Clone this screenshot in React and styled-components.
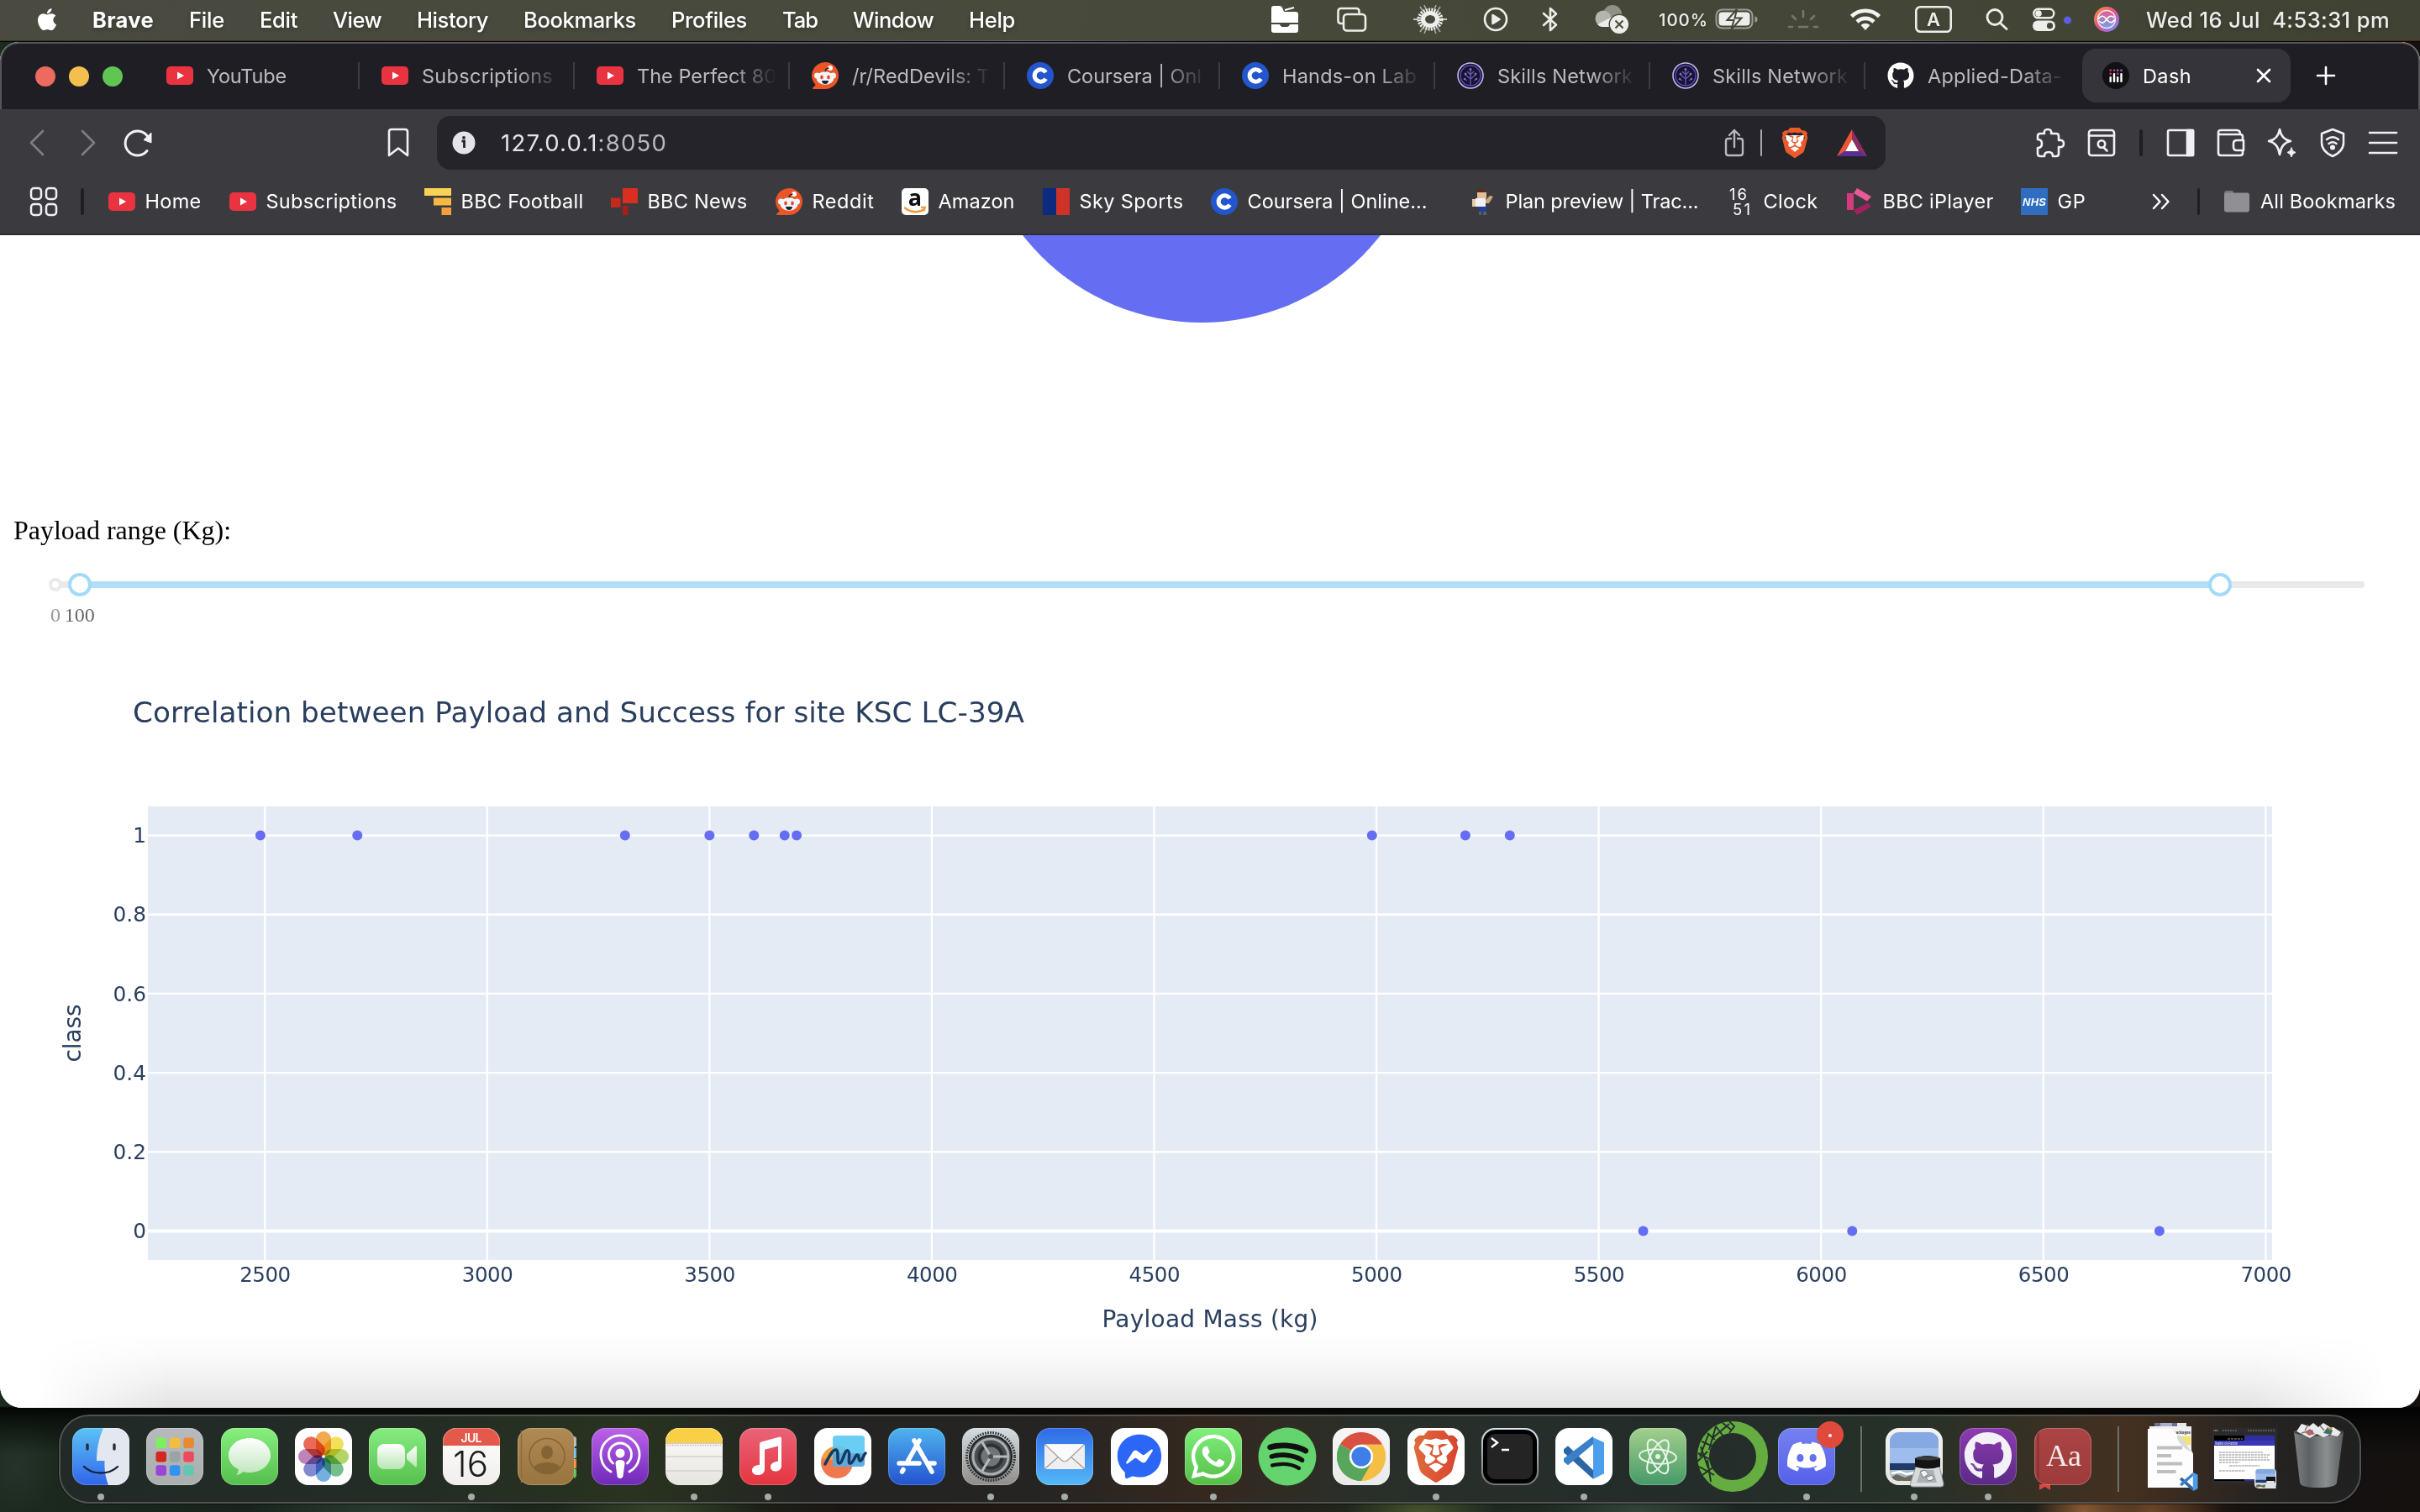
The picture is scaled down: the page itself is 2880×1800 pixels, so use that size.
import React, { useLayoutEffect, useRef } from "react";
import styled, { createGlobalStyle } from "styled-components";
import { FaApple, FaBluetoothB, FaGithub, FaSpotify, FaWhatsapp, FaDiscord, FaFacebookMessenger } from "react-icons/fa";
import { SiBrave } from "react-icons/si";

const GlobalStyle = createGlobalStyle`
  html, body { margin: 0; padding: 0; background: #10140f; }
  * { box-sizing: border-box; }
  svg { display: block; flex: none; }
`;

/* ---------- text that spreads over a known width ---------- */

const TextSpan = styled.span`
  display: inline-block;
  white-space: pre;
  flex: none;
`;

function FitText({ width, children }) {
  const ref = useRef(null);
  useLayoutEffect(() => {
    const el = ref.current;
    el.style.letterSpacing = "0px";
    const natural = el.getBoundingClientRect().width;
    el.style.letterSpacing = `${(width - natural) / el.textContent.length}px`;
  }, [width, children]);
  return <TextSpan ref={ref}>{children}</TextSpan>;
}

/* ---------- desktop ---------- */

const Desktop = styled.div`
  width: 2880px;
  height: 1800px;
  overflow: hidden;
  display: flex;
  flex-direction: column;
  font-family: Inter, "Liberation Sans", sans-serif;
  background:
    linear-gradient(180deg, transparent 1674px, rgba(0, 0, 0, 0.85) 1676px, rgba(0, 0, 0, 0.55) 1690px, transparent 1730px),
    radial-gradient(60px 60px at 2480px 1800px, #8a5a35, transparent 100%),
    radial-gradient(90px 60px at 2560px 1800px, #6b4629, transparent 100%),
    radial-gradient(90px 40px at 1690px 1800px, #46512c, transparent 100%),
    radial-gradient(120px 40px at 1950px 1800px, #34443a, transparent 100%),
    radial-gradient(120px 60px at 780px 1800px, #34422a, transparent 100%),
    radial-gradient(50px 60px at 20px 1745px, #26332a, transparent 100%),
    radial-gradient(160px 40px at 450px 1800px, #2a3a30, transparent 100%),
    linear-gradient(90deg, #1c2a1f 0, #17231c 300px, #1e2a1b 820px, #1b1613 1000px, #271b12 1400px, #1d2a20 1700px, #1b2622 2100px, #1b2018 2400px, #22150e 2600px, #131110 2700px, #14110f 2880px);
`;

/* ---------- menu bar ---------- */

const MenuBar = styled.header`
  height: 48px;
  flex: none;
  display: flex;
  align-items: center;
  padding: 0 36px 2px 41px;
  background: linear-gradient(90deg, #4a4a40, #474a3b 50%, #404334);
  color: #fff;
  font-size: 25.5px;
  text-shadow: 0 2px 5px rgba(0, 0, 0, 0.3);
`;

const Menus = styled.nav`
  display: flex;
  align-items: center;
  gap: 42px;
  margin-left: 39px;
`;

const MenuItem = styled.span`
  font-weight: ${(p) => (p.$bold ? 700 : 500)};
  display: flex;
`;

const Extras = styled.div`
  margin-left: auto;
  display: flex;
  align-items: center;
  color: #ededea;
`;

const Extra = styled.div`
  display: flex;
  align-items: center;
  margin-left: ${(p) => p.$gap}px;
  font-size: ${(p) => p.$size || 25.5}px;
  font-weight: 500;
`;

const WallpaperSliver = styled.div`
  height: 2px;
  flex: none;
  border-bottom: 1px solid #050505;
  background: linear-gradient(90deg, #2c3a1e, #3b2a20 10%, #5a3322 20%, #3f3a30 30%, #5b6a80 42%, #2c2a1c 55%, #3b3a28 65%, #6f7c8e 75%, #32361f 85%, #4c3a26 95%, #571f14);
`;

/* ---------- browser window ---------- */

const Window = styled.main`
  height: 1626px;
  flex: none;
  display: flex;
  flex-direction: column;
  border-radius: 22px 22px 26px 26px;
  overflow: hidden;
  background: #fff;
`;

const TabStrip = styled.div`
  height: 80px;
  flex: none;
  display: flex;
  align-items: center;
  background: #1f1e24;
  border: 2px solid #55555a;
  border-bottom: 0;
  border-radius: 22px 22px 0 0;
  padding: 0 0 2px 40px;
`;

const Lights = styled.div`
  display: flex;
  gap: 16px;
  margin-right: 26px;
  padding-top: 2px;
`;

const Light = styled.i`
  width: 24px;
  height: 24px;
  border-radius: 50%;
  background: ${(p) => p.$c};
`;

const Tab = styled.div`
  width: 256px;
  height: 32px;
  display: flex;
  align-items: center;
  gap: 16px;
  padding-left: 26px;
  border-right: 2px solid ${(p) => (p.$last ? "transparent" : "#3d3c42")};
  color: #bcbcbf;
  font-size: 23.5px;
`;

const TabTitle = styled.div`
  width: 172px;
  height: 32px;
  display: flex;
  align-items: center;
  mask-image: linear-gradient(90deg, #000 112px, transparent 166px);
`;

const ActiveTab = styled.div`
  width: 248px;
  height: 64px;
  margin-left: 2px;
  border-radius: 16px;
  background: #35343a;
  display: flex;
  align-items: center;
  padding: 0 23px 0 24px;
  color: #fff;
  font-size: 23.5px;
`;

const ActiveTitle = styled.div`
  margin-left: 16px;
  flex: 1;
  display: flex;
`;

const NewTab = styled.div`
  margin-left: 30px;
`;

const Toolbar = styled.div`
  height: 80px;
  flex: none;
  display: flex;
  align-items: center;
  background: #3b3a3f;
  padding: 0 26px 0 35px;
`;

const NavButtons = styled.div`
  display: flex;
  align-items: center;
  gap: 42px;
  width: 426px;
`;

const AddressBar = styled.div`
  width: 1724px;
  height: 64px;
  margin-left: 33px;
  border-radius: 16px;
  background: #25242a;
  display: flex;
  align-items: center;
  padding: 0 21px 0 18px;
  color: #e4e3ea;
  font-size: 27.5px;
`;

const Address = styled.div`
  flex: 1;
  margin-left: 30px;
  display: flex;
  b { font-weight: 400; color: #b9b8bf; }
`;

const Tools = styled.div`
  margin-left: auto;
  display: flex;
  align-items: center;
  gap: 26px;
`;

const Divider = styled.i`
  width: ${(p) => p.$w || 4}px;
  height: 32px;
  border-radius: 2px;
  background: ${(p) => p.$c || "#1f1e24"};
  margin: 0 ${(p) => p.$r || 0}px 0 ${(p) => p.$l || 0}px;
`;

const BookmarkBar = styled.div`
  height: 70px;
  flex: none;
  display: flex;
  align-items: center;
  background: #3b3a3f;
  border-bottom: 2px solid #2e2d32;
  padding: 0 28px 9px 35px;
  color: #fff;
  font-size: 23.5px;
`;

const Bookmark = styled.div`
  width: ${(p) => p.$w}px;
  flex: none;
  display: flex;
  align-items: center;
  gap: 12px;
`;

/* ---------- dashboard page ---------- */

const Page = styled.section`
  height: 1396px;
  position: relative;
  display: flex;
  flex-direction: column;
  background: #fff;
  &::after {
    content: "";
    position: absolute;
    left: 0;
    right: 0;
    bottom: 0;
    height: 90px;
    background: linear-gradient(180deg, transparent, rgba(0, 0, 0, 0.02) 30%, rgba(0, 0, 0, 0.06) 65%, rgba(0, 0, 0, 0.11));
    mask-image: linear-gradient(90deg, transparent 40px, #000 200px, #000 2680px, transparent 2840px);
  }
`;

const RangeLabel = styled.p`
  margin: 3px 0 0 16px;
  height: 36px;
  line-height: 36px;
  font-family: "Liberation Serif", serif;
  font-size: 32px;
  color: #000;
`;

const Slider = styled.div`
  position: relative;
  height: 64px;
  margin: 33px 66px 0 66px;
  padding-top: 10px;
`;

const Rail = styled.div`
  height: 8px;
  border-radius: 4px;
  background: #e9e9e9;
`;

const Track = styled.div`
  height: 8px;
  background: #b2dff7;
`;

const Knob = styled.i`
  position: absolute;
  top: ${(p) => (p.$small ? 6 : 0)}px;
  width: ${(p) => (p.$small ? 16 : 28)}px;
  height: ${(p) => (p.$small ? 16 : 28)}px;
  transform: translateX(-50%);
  border-radius: 50%;
  background: #fff;
  border: 4px solid ${(p) => (p.$small ? "#e9e9e9" : "#a4daf9")};
`;

const Mark = styled.span`
  position: absolute;
  top: 36px;
  transform: translateX(-50%);
  font: 24px/28px "Liberation Serif", serif;
  color: ${(p) => (p.$active ? "#666" : "#999")};
`;

const RANGE_MAX = 9600;
const pct = (v) => `${(v / RANGE_MAX) * 100}%`;

function PayloadSlider() {
  return (
    <Slider>
      <Rail>
        <Track style={{ marginLeft: pct(100), width: pct(8900) }} />
      </Rail>
      <Knob $small style={{ left: pct(0) }} />
      <Knob style={{ left: pct(100) }} />
      <Knob style={{ left: pct(9000) }} />
      <Mark style={{ left: pct(0) }}>0</Mark>
      <Mark $active style={{ left: pct(100) }}>100</Mark>
    </Slider>
  );
}

const POINTS = [
  [2490, 1], [2708, 1], [3310, 1], [3500, 1], [3600, 1], [3669, 1], [3696, 1],
  [4990, 1], [5200, 1], [5300, 1], [5600, 0], [6070, 0], [6761, 0],
];
const sx = (v) => 315.2 + (v - 2500) * 0.52915;
const sy = (v) => 1465.4 - v * 470.8;

function Scatter() {
  const xs = [2500, 3000, 3500, 4000, 4500, 5000, 5500, 6000, 6500, 7000];
  const ys = [0, 0.2, 0.4, 0.6, 0.8, 1];
  return (
    <svg width="2880" height="930" viewBox="0 746 2880 930" fontFamily="Verdana, 'DejaVu Sans', sans-serif" fill="#2a3f5f">
      <text x="158" y="860" fontSize="34.500" textLength="1061" lengthAdjust="spacingAndGlyphs">
        Correlation between Payload and Success for site KSC LC-39A
      </text>
      <rect x="176" y="960" width="2528" height="540" fill="#e5ebf5" />
      {xs.map((v) => (
        <g key={v}>
          <line x1={sx(v)} x2={sx(v)} y1="960" y2="1500" stroke="#fff" strokeWidth="2.200" />
          <text x={sx(v) + 0.5} y="1526" fontSize="24.500" textAnchor="middle" textLength="61">{v}</text>
        </g>
      ))}
      {ys.map((v) => (
        <g key={v}>
          <line x1="176" x2="2704" y1={sy(v)} y2={sy(v)} stroke="#fff" strokeWidth={v === 0 ? 4 : 2.4} />
          <text x="174" y={sy(v) + 8.6} fontSize="24.800" textAnchor="end">{v}</text>
        </g>
      ))}
      {POINTS.map(([x, y]) => (
        <circle key={x} cx={sx(x)} cy={sy(y)} r="6" fill="#656ef2" />
      ))}
      <text x="1440" y="1580" fontSize="28" textAnchor="middle" textLength="257">Payload Mass (kg)</text>
      <text transform="translate(96 1230) rotate(-90)" fontSize="28" textAnchor="middle" textLength="69">class</text>
    </svg>
  );
}

/* ---------- favicons ---------- */

const YouTube = () => (
  <svg width="32" height="32" viewBox="0 0 32 32">
    <rect y="5" width="32" height="22" rx="5" fill="#ea3340" />
    <path d="M13 11.500v9l8-4.500z" fill="#fff" />
  </svg>
);

const Reddit = () => (
  <svg width="32" height="32" viewBox="0 0 32 32">
    <path d="M16 0a16 16 0 0 1 0 32H2.200c-1 0-1.400-1-.8-1.700L4.700 27.300A16 16 0 0 1 16 0z" fill="#eb5528" />
    <circle cx="22" cy="7" r="3" fill="#fff" />
    <path d="M16 12c0-3 2-5 4.500-5" stroke="#222" strokeWidth="1.500" fill="none" />
    <circle cx="6.500" cy="16" r="3.500" fill="#f3f6f8" />
    <circle cx="25.500" cy="16" r="3.500" fill="#f3f6f8" />
    <ellipse cx="16" cy="19" rx="10.500" ry="7.800" fill="#f0f5f8" />
    <ellipse cx="12" cy="18" rx="1.800" ry="2.400" fill="#e8462a" />
    <ellipse cx="20" cy="18" rx="1.800" ry="2.400" fill="#e8462a" />
    <path d="M12 22h8c-.5 3-2 4-4 4s-3.500-1-4-4z" fill="#18242b" />
  </svg>
);

const Coursera = () => (
  <svg width="32" height="32" viewBox="0 0 32 32">
    <circle cx="16" cy="16" r="16" fill="#2356cc" />
    <path d="M22.500 12.200a7.200 7.200 0 1 0 0 7.600" stroke="#fff" strokeWidth="5" fill="none" />
  </svg>
);

const Skills = () => (
  <svg width="32" height="32" viewBox="0 0 32 32" fill="none">
    <circle cx="16" cy="16" r="15" fill="#17142b" stroke="#c9bdf0" strokeWidth="1.500" />
    <circle cx="16" cy="16" r="12" stroke="#5b45c4" strokeWidth="1.500" />
    <path d="M16 27V9M16 20l-6-5M16 20l6-5M16 15l-4-4M16 15l4-4M12 22l-3-2M20 22l3-2" stroke="#6557b5" strokeWidth="1.400" />
    <g fill="#7b70b8"><circle cx="16" cy="8.500" r="1.500" /><circle cx="10" cy="14" r="1.500" /><circle cx="22" cy="14" r="1.500" /><circle cx="9" cy="20" r="1.300" /><circle cx="23" cy="20" r="1.300" /></g>
  </svg>
);

const Dash = () => (
  <svg width="32" height="32" viewBox="0 0 32 32">
    <circle cx="16" cy="16" r="16" fill="#111114" />
    <g fill="#fff">
      <rect x="8.500" y="17" width="2.400" height="7" rx="1" /><rect x="12.800" y="13" width="2.400" height="11" rx="1" />
      <rect x="17" y="17" width="2.400" height="7" rx="1" /><rect x="21.300" y="13" width="2.400" height="11" rx="1" />
    </g>
    <g fill="#d0407a"><circle cx="9.700" cy="9.700" r="1.300" /><circle cx="9.700" cy="13.700" r="1.300" /><circle cx="14" cy="9.700" r="1.300" /><circle cx="18.200" cy="13.700" r="1.300" /></g>
    <g fill="#8a7ae0"><circle cx="18.200" cy="9.700" r="1.300" /><circle cx="22.500" cy="9.700" r="1.300" /></g>
  </svg>
);

const BbcFootball = () => (
  <svg width="32" height="32" viewBox="0 0 32 32">
    <path d="M0 0h32v9H0z" fill="#f8d254" /><path d="M11 11.500h21v9H11z" fill="#f5b941" /><path d="M20.500 23H32v9H20.500z" fill="#f2a03a" />
  </svg>
);

const BbcNews = () => (
  <svg width="32" height="32" viewBox="0 0 32 32">
    <path d="M14 0h18v18H14z" fill="#d92e20" /><path d="M0 11.500h11.500V23H0z" fill="#c5281c" /><path d="M14 21h6.500v11H14z" fill="#a81f18" />
  </svg>
);

const Amazon = () => (
  <svg width="32" height="32" viewBox="0 0 32 32">
    <rect width="32" height="32" rx="5" fill="#fff" />
    <text x="16" y="21" fontSize="27" fontWeight="700" textAnchor="middle" fontFamily="Open Sans, sans-serif" fill="#111">a</text>
    <path d="M4 23.500c7 6 17 6 23 1.500" stroke="#ef9a35" strokeWidth="2.400" fill="none" strokeLinecap="round" />
    <path d="M23 23l5-.5-1.500 5" stroke="#ef9a35" strokeWidth="1.800" fill="none" />
  </svg>
);

const Sky = () => (
  <svg width="32" height="32" viewBox="0 0 32 32">
    <path d="M0 0h16v32H0z" fill="#0e2a7f" /><path d="M16 0h16v32H16z" fill="#cf3327" />
  </svg>
);

const PlanPerson = () => (
  <svg width="32" height="32" viewBox="0 0 32 32">
    <path d="M10 2h10v4H10z" fill="#5e2a1a" /><path d="M10 5h11v7H10z" fill="#e9bd93" /><path d="M4 13h5v9H4z" fill="#e6c9a8" />
    <path d="M8 12h12v10H8z" fill="#eef0f6" /><path d="M20 14l5-5 4 1-5 8h-4z" fill="#c9a67c" /><path d="M12 22h9v6h-9z" fill="#20409c" />
    <path d="M12 28h3v4h-3zM17 28h4v4h-4z" fill="#5c5c64" />
  </svg>
);

const ClockIcon = () => (
  <svg width="32" height="32" viewBox="0 0 32 32" fill="#fff" fontFamily="Inter, sans-serif" fontSize="18.500">
    <text x="3" y="13.500" textLength="21">16</text>
    <text x="7" y="31.500" textLength="21">51</text>
  </svg>
);

const IPlayer = () => (
  <svg width="32" height="32" viewBox="0 0 32 32">
    <path d="M1 6h8v20H1z" fill="#d53b7c" /><path d="M13 0l17 10-5 5.500L9 6z" fill="#ea5b96" /><path d="M13 32l17-10-4-4.500L9 26z" fill="#a3215c" />
  </svg>
);

const Nhs = () => (
  <svg width="32" height="32" viewBox="0 0 32 32">
    <path d="M0 0h32v32H0z" fill="#2f6dc0" />
    <text x="16" y="20.500" fontSize="13" fontWeight="700" fontStyle="italic" textAnchor="middle" textLength="28" fontFamily="Liberation Sans, sans-serif" fill="#fff">NHS</text>
  </svg>
);

const Folder = () => (
  <svg width="32" height="32" viewBox="0 0 32 32">
    <path d="M1 6q0-3 3-3h6q2 0 2 2v2H1z" fill="#77777c" />
    <rect x="1" y="5.500" width="30" height="23" rx="3" fill="#8f8f94" />
  </svg>
);

/* ---------- toolbar glyphs ---------- */

const Line = ({ w = 34, h = 34, c = "#f1f0f6", sw = 2.6, children }) => (
  <svg width={w} height={h} viewBox={`0 0 ${w} ${h}`} fill="none" stroke={c} strokeWidth={sw} strokeLinecap="round" strokeLinejoin="round">
    {children}
  </svg>
);

function GitHubMark() {
  return <FaGithub size={32} color="#fff" />;
}

const TABS = [
  [YouTube, "YouTube", 95],
  [YouTube, "Subscriptions", 156],
  [YouTube, "The Perfect 80", 166],
  [Reddit, "/r/RedDevils: T", 164],
  [Coursera, "Coursera | Onl", 160],
  [Coursera, "Hands-on Lab", 160],
  [Skills, "Skills Network", 161],
  [Skills, "Skills Network", 161],
  [GitHubMark, "Applied-Data-", 160],
];

const BOOKMARKS = [
  [YouTube, "Home", 67, 144],
  [YouTube, "Subscriptions", 156, 232],
  [BbcFootball, "BBC Football", 146, 222],
  [BbcNews, "BBC News", 119, 196],
  [Reddit, "Reddit", 74, 150],
  [Amazon, "Amazon", 91, 168],
  [Sky, "Sky Sports", 124, 200],
  [Coursera, "Coursera | Online...", 214, 307],
  [PlanPerson, "Plan preview | Trac...", 230, 307],
  [ClockIcon, "Clock", 65, 142],
  [IPlayer, "BBC iPlayer", 132, 208],
  [Nhs, "GP", 34, 156],
];

/* ---------- dock ---------- */

const DockBar = styled.footer`
  width: 2740px;
  height: 106px;
  flex: none;
  margin: 8px 0 0 70px;
  border: 2px solid #50534f;
  border-radius: 36px;
  box-shadow: 0 0 0 1px rgba(0, 0, 0, 0.5);
  padding: 0 0 0 4px;
  display: flex;
  align-items: stretch;
  background: linear-gradient(90deg, #212a27 0, #232c25 400px, #29331f 680px, #232423 900px, #252423 1150px, #35281f 1360px, #29302a 1560px, #242c2a 1900px, #263129 2200px, #443020 2460px, #262321 2620px, #1f2020 2740px);
`;

const DockItem = styled.div`
  width: 88.26px;
  flex: none;
  position: relative;
  display: flex;
  flex-direction: column;
  align-items: center;
  padding-top: 14px;
  svg { overflow: visible; }
  &::after {
    content: "";
    width: 8px;
    height: 8px;
    margin-top: 10px;
    border-radius: 50%;
    background: ${(p) => (p.$running ? "#a3aca5" : "transparent")};
  }
`;

const DockSeparator = styled.i`
  width: 2px;
  height: 78px;
  margin: 12px ${(p) => p.$r}px 0 ${(p) => p.$l}px;
  background: #6a6f6b;
  flex: none;
`;

const Badge = styled.i`
  position: absolute;
  left: 56px;
  top: 6px;
  width: 32px;
  height: 32px;
  border-radius: 50%;
  background: #e04a3c;
  &::after {
    content: "";
    position: absolute;
    left: 14px;
    top: 15px;
    width: 4px;
    height: 4px;
    border-radius: 50%;
    background: #fff;
  }
`;

function Tile({ id, from, to, children }) {
  return (
    <svg width="68" height="68" viewBox="0 0 68 68">
      <defs>
        <linearGradient id={id} x2="0" y2="1">
          <stop stopColor={from} />
          <stop offset="1" stopColor={to} />
        </linearGradient>
        <clipPath id={`${id}-clip`}><rect width="68" height="68" rx="16" /></clipPath>
      </defs>
      <rect width="68" height="68" rx="16" fill={`url(#${id})`} />
      {children}
      <rect x=".5" y=".5" width="67" height="67" rx="15.500" fill="none" stroke="#fff" strokeOpacity=".22" />
    </svg>
  );
}

const Finder = () => (
  <Tile id="finder" from="#5cc3f5" to="#3065ea">
    <path clipPath="url(#finder-clip)" d="M37 0C31 14 29 27 29 39h9.500c-.4 11 1 20 4.500 29h25V0z" fill="#e3e7f0" />
    <path d="M18 20v5M50 20v5" stroke="#2a2d33" strokeWidth="3.400" strokeLinecap="round" />
    <path d="M14 46c10 10 30 10 40 0" stroke="#16233c" strokeWidth="2.400" fill="none" strokeLinecap="round" />
  </Tile>
);

const Launchpad = () => {
  const colors = ["#7df05c", "#f3bd3e", "#e98a30", "#d2281d", "#9aa3a6", "#ee4a5e", "#9a45d6", "#2f92f5", "#5fc9b0"];
  return (
    <Tile id="launch" from="#b6babd" to="#abaeae">
      {colors.map((c, i) => (
        <rect key={c} x={11.5 + (i % 3) * 16.4} y={11.5 + Math.floor(i / 3) * 16.4} width="12.500" height="12.500" rx="3" fill={c} />
      ))}
    </Tile>
  );
};

const Messages = () => (
  <Tile id="msg" from="#86ef7e" to="#54bf4c">
    <defs><linearGradient id="msgb" x2="0" y2="1"><stop stopColor="#fff" /><stop offset="1" stopColor="#bfe5bb" /></linearGradient></defs>
    <path d="M34 12c14 0 25 9 25 20.500S48 53 34 53c-3 0-5.500-.3-8-1-1.500 2-4 3.500-8 4 2-2 3-4.500 2.500-7C13 45.500 9 39.500 9 32.500 9 21 20 12 34 12z" fill="url(#msgb)" />
  </Tile>
);

const Photos = () => {
  const petals = ["#f19a2e", "#f3dc3b", "#a9cf4b", "#5fb47c", "#5ba3dd", "#7076c9", "#b56fae", "#e8503a"];
  return (
    <Tile id="photos" from="#ffffff" to="#fbfbfb">
      {petals.map((c, i) => (
        <rect key={c} x="25" y="4" width="18" height="29" rx="9" fill={c} opacity=".85" transform={`rotate(${i * 45} 34 34)`} style={{ mixBlendMode: "multiply" }} />
      ))}
      <circle cx="34" cy="34" r="1.800" fill="#fff" />
    </Tile>
  );
};

const FaceTime = () => (
  <Tile id="ft" from="#86ec80" to="#56c04e">
    <defs><linearGradient id="ftb" x2="0" y2="1"><stop stopColor="#fff" /><stop offset="1" stopColor="#b9e5b4" /></linearGradient></defs>
    <rect x="10" y="19" width="33" height="30" rx="8" fill="url(#ftb)" />
    <path d="M45 31l10-9q2-1.500 2 1v22q0 2.500-2 1l-10-9z" fill="url(#ftb)" />
  </Tile>
);

const Calendar = () => (
  <Tile id="cal" from="#ffffff" to="#efeeec">
    <path clipPath="url(#cal-clip)" d="M0 0h68v21H0z" fill="#e35a4c" />
    <text x="34" y="16.500" fontSize="14" fontWeight="600" textAnchor="middle" textLength="25" fill="#fff" fontFamily="Inter, sans-serif">JUL</text>
    <text x="33" y="57.500" fontSize="42" fontWeight="300" textAnchor="middle" textLength="42" fill="#1c1c1c" fontFamily="Inter, sans-serif">16</text>
  </Tile>
);

const Contacts = () => (
  <Tile id="contacts" from="#b08a55" to="#98743f">
    <path d="M67 10q3 0 3 3v9h-3z" fill="#b8b8b8" /><path d="M67 24h3v12h-3z" fill="#6ab8ea" /><path d="M67 37h3v11h-3z" fill="#f08a35" /><path d="M67 49h3v8q-1 3-3 3z" fill="#57c553" />
    <path d="M4.500 3v62" stroke="#8d6b3b" strokeWidth="1.500" />
    <g fill="none" stroke="#856434" strokeWidth="1.500"><circle cx="35" cy="33.500" r="21" /></g>
    <ellipse cx="35" cy="29" rx="7" ry="8" fill="#856434" />
    <path d="M19 47c5-8 27-8 32 0-8 10-24 10-32 0z" fill="#856434" />
  </Tile>
);

const Podcasts = () => (
  <Tile id="pod" from="#bb62e8" to="#6f29b8">
    <g fill="none" stroke="#fff" strokeWidth="2.800" strokeLinecap="round">
      <path d="M23 52A23 23 0 1 1 45 52" />
      <path d="M25.500 42A13.500 13.500 0 1 1 42.500 42" />
    </g>
    <circle cx="34" cy="30" r="5.500" fill="#fff" />
    <path d="M28.500 42q0-4 5.500-4t5.500 4l-2 15q-.5 3-3.500 3t-3.500-3z" fill="#fff" />
  </Tile>
);

const Notes = () => (
  <Tile id="notes" from="#fdfdfb" to="#e6e4df">
    <path clipPath="url(#notes-clip)" d="M0 0h68v17H0z" fill="#f9cf45" />
    <path d="M0 18h68" stroke="#c8a24a" strokeWidth="1" />
    <path d="M2 20.500h64" stroke="#b9b8b4" strokeWidth="1.500" strokeDasharray="1.500 1.500" />
    <path d="M0 34h68M0 51h68" stroke="#d3d2ce" strokeWidth="1.500" />
  </Tile>
);

const Music = () => (
  <Tile id="music" from="#ea6478" to="#e5343f">
    <path d="M26 16.500l22-6q2-.3 2 2V45c0 4-3 6.500-7 6.500-3.500 0-6-2-6-5 0-4 3-6 9-7V21.500l-16 4.300V49c0 4.500-3.500 7-8 7-4 0-7-2-7-5.500 0-4.500 4-6 9-6.800V19q0-2 2-2.500z" fill="#fff" />
  </Tile>
);

const Freeform = () => (
  <Tile id="free" from="#ffffff" to="#ffffff">
    <ellipse cx="27" cy="41" rx="19" ry="19" fill="#f0784f" />
    <path d="M9 36a19 19 0 0 1 36-3l-10 8z" fill="#f3a13c" />
    <rect x="22" y="9" width="38" height="37" rx="4" fill="#5ac8f2" fillOpacity=".9" />
    <path d="M22 30h38v12q0 4-4 4H26q-4 0-4-4z" fill="#5c9fd6" opacity=".7" />
    <path d="M13 43c4-8 9-18 13-17s0 16 4 16 6-17 10-15-1 16 3 15 5-9 8-10 1 8 4 7 3-6 6-9" stroke="#123a63" strokeWidth="3.500" fill="none" strokeLinecap="round" />
  </Tile>
);

const AppStore = () => (
  <Tile id="store" from="#4fb4ee" to="#2352d0">
    <g stroke="#fff" strokeWidth="5.500" strokeLinecap="round">
      <path d="M37 15L22 42M31 15l21 37M13 42h24M47 42h8" /><path d="M18 49.500l-1.500 2.500" />
    </g>
  </Tile>
);

const Settings = () => (
  <Tile id="set" from="#d3dde2" to="#8f8c88">
    <circle cx="34" cy="34" r="28.500" fill="none" stroke="#2b2d2e" strokeWidth="3" strokeDasharray="1.700 1.400" />
    <circle cx="34" cy="34" r="25" fill="#4b4e50" stroke="#1f2021" strokeWidth="2" />
    <circle cx="34" cy="34" r="21" fill="none" stroke="#aab0b2" strokeWidth="3" />
    <circle cx="34" cy="34" r="13.500" fill="#6f7476" stroke="#2e3031" strokeWidth="4" />
    <path d="M34 34h20M34 34L24 17M34 34L24 51" stroke="#b6bcbe" strokeWidth="3" />
    <circle cx="34" cy="34" r="3" fill="#4b4e50" />
  </Tile>
);

const Mail = () => (
  <Tile id="mail" from="#2f6ae8" to="#55b9f6">
    <rect x="10" y="19" width="48" height="30" rx="3" fill="#efefef" />
    <path d="M11 48l16-14M57 48L41 34" stroke="#9a9a9a" strokeWidth="1.200" />
    <path d="M11 20l19 18q4 3.500 8 0l19-18" fill="#fafafa" stroke="#a2a2a2" strokeWidth="1.200" />
  </Tile>
);

const Messenger = () => (
  <Tile id="mess" from="#ffffff" to="#ffffff">
    <FaFacebookMessenger x="7" y="7" size={54} fill="#2b66f6" />
  </Tile>
);

const WhatsApp = () => (
  <Tile id="wa" from="#7ff07c" to="#55bd47">
    <FaWhatsapp x="4" y="4" size={60} fill="#fff" />
  </Tile>
);

const Spotify = () => (
  <svg width="68" height="68" viewBox="0 0 68 68">
    <circle cx="34" cy="34" r="33" fill="#111" />
    <FaSpotify x="-1.500" y="-1.500" size={71} fill="#65d46e" />
  </svg>
);

const Chrome = () => (
  <Tile id="chr" from="#f6f6f6" to="#eaeaea">
    <path d="M34 34L8.900 19.500A29 29 0 0 1 59.100 19.500z" fill="#d95140" />
    <path d="M34 34L59.100 19.500A29 29 0 0 1 34 63z" fill="#f5bf45" />
    <path d="M34 34L34 63A29 29 0 0 1 8.900 19.500z" fill="#58a55c" />
    <path d="M34 19.500h25.100A29 29 0 0 1 34 63l13-22z" fill="#f5bf45" />
    <path d="M8.900 19.500L21.500 41 34 48.500 46.500 41 34 63A29 29 0 0 1 8.900 19.500z" fill="#58a55c" />
    <circle cx="34" cy="34" r="14.200" fill="#fff" />
    <circle cx="34" cy="34" r="11.500" fill="#3f7ee8" />
  </Tile>
);

const BraveDock = () => (
  <Tile id="brv" from="#ffffff" to="#ffffff">
    <defs><linearGradient id="brvg"><stop stopColor="#de6b3b" /><stop offset="1" stopColor="#d9442f" /></linearGradient></defs>
    <SiBrave x="3" y="3" size={62} fill="url(#brvg)" />
  </Tile>
);

const Terminal = () => (
  <Tile id="term" from="#cfe0e8" to="#5f5c5b">
    <rect x="2" y="2" width="64" height="64" rx="14.500" fill="#000" />
    <rect x="7" y="7" width="54" height="54" rx="9" fill="#242424" />
    <path d="M12 12l7 5.500-7 5.500M24 26h9" stroke="#fff" strokeWidth="2.400" fill="none" />
  </Tile>
);

const CodeGlyph = () => (
  <g>
    <path d="M10 26l5-4 30 27v10L10 29z" fill="#2b66a5" />
    <path d="M10 42l5 4 30-27V9L10 39z" fill="#3a80c9" />
    <path d="M45 9l13 6v38l-13 6z" fill="#4c9eea" />
  </g>
);

const VsCode = () => (
  <Tile id="vsc" from="#ffffff" to="#ffffff">
    <g transform="translate(0 4.700) translate(0 -3.500)"><path d="M10 24l5-4 30 29v10.500L10 28z" fill="#2b66a5" /><path d="M10 39l5 4 30-25V8.500L10 35z" fill="#3a80c9" /><path d="M45 12.500l13 6v31l-13 17z" fill="none" /><path d="M45 10l13 6v37l-13 6.500z" fill="#4c9eea" /></g>
  </Tile>
);

const Atom = () => (
  <Tile id="atom" from="#a3cf8c" to="#459a68">
    <g fill="none" stroke="#e9f5ea" strokeWidth="2">
      <ellipse cx="34" cy="34" rx="22" ry="8.500" transform="rotate(4 34 34)" />
      <ellipse cx="34" cy="34" rx="22" ry="8.500" transform="rotate(64 34 34)" />
      <ellipse cx="34" cy="34" rx="22" ry="8.500" transform="rotate(118 34 34)" />
    </g>
    <circle cx="34" cy="34" r="3" fill="#e9f5ea" />
  </Tile>
);

const Anaconda = () => (
  <svg width="68" height="68" viewBox="0 0 68 68">
    <circle cx="34" cy="34" r="35" fill="none" stroke="#65ad41" strokeWidth="14" />
    <g stroke="#26302b" strokeWidth="2" fill="none">
      <path d="M30-8l6 6-6 8M22-6l10 8M14-2l9 12M30-5L10 12M4 6l9 8M14-2L6 26M-3 16l14 6M5 8L-5 34M-7 30l15 8M-4 22l9 26M-8 40l12-12M-6 46l18 10M4 38l4 26M-2 56l14-10" />
    </g>
  </svg>
);

const Discord = () => (
  <Tile id="disc" from="#7581f0" to="#5560ea">
    <FaDiscord x="9" y="9" size={50} fill="#fff" />
  </Tile>
);

const Scenery = () => (
  <g>
    <path d="M0 0h60v40H0z" fill="#9dbdec" />
    <path d="M0 0h60v14H0z" fill="#86a9e4" />
    <path d="M0 32h60v9H0z" fill="#1f3b66" />
    <path d="M0 40h60v20H0z" fill="#a9b9c6" />
    <path d="M0 50l8-5 10 4 8-3 8 6v10H0z" fill="#6b6a5c" />
    <path d="M2 44l10-2 8 3 10-2M4 56l10-2 8 2" stroke="#fff" strokeWidth="2.500" fill="none" />
  </g>
);

const PreviewApp = () => (
  <Tile id="prev" from="#f3f3f1" to="#e4e4e0">
    <clipPath id="prev-pic"><rect x="5" y="5" width="58" height="58" rx="11" /></clipPath>
    <g clipPath="url(#prev-pic)"><g transform="translate(5 10)"><path d="M0-6h60v8H0z" fill="#86a9e4" /><Scenery /></g></g>
    <path d="M36 46h28l5 20q.5 4-3 4H33q-4 0-3.500-4z" fill="#d5dadc" stroke="#8d9295" />
    <path d="M42 50h15l4 15H37z" fill="#a9b1b5" />
    <path d="M41 52l6-2 4 5-6 4zM48 59l7-3 3 5-7 2z" fill="#f1f1f1" stroke="#666" strokeWidth=".8" />
    <path d="M35 36q15-6 30 0v10q-15 5-30 0z" fill="#141414" />
    <ellipse cx="50" cy="36" rx="14" ry="2.500" fill="#3a3a3a" />
  </Tile>
);

const GitHubDesktop = () => (
  <Tile id="ghd" from="#8c3bb0" to="#5a2a86">
    <FaGithub x="5" y="4" size={58} fill="#f3f1f8" />
  </Tile>
);

const Dictionary = () => (
  <Tile id="dict" from="#ac4444" to="#9c3b3b">
    <path d="M6 67h13v7l-6.500-4L6 74z" fill="#d9473d" />
    <path d="M4.500 4v60" stroke="#7f2c2c" strokeWidth="1.500" />
    <text x="35" y="44.500" fontSize="35" textAnchor="middle" textLength="42" lengthAdjust="spacingAndGlyphs" fontFamily="Liberation Serif, serif" fill="#f3e9e7">Aa</text>
  </Tile>
);

const CodeDocument = () => (
  <svg width="68" height="68" viewBox="0 0 68 68">
    <path d="M15-6h38v6H15z" fill="#6e6f8c" /><path d="M22-6h14v6H22z" fill="#a9add6" /><path d="M42-6h11v6H42z" fill="#e8e8e8" />
    <path d="M9-2h50v60H9z" fill="#f1f1f1" />
    <path d="M40 10h18v10H40z" fill="#f2e36a" />
    <text x="38" y="7" fontSize="5" fontWeight="700" fontFamily="Inter, sans-serif" fill="#333" textLength="20" lengthAdjust="spacingAndGlyphs">packages</text>
    <path d="M7 1h27q8 1 9 14 13 2 18 16v40H7z" fill="#fdfdfd" />
    <path d="M42 8q-1 12 19 22-5-4-8-12-4-6-11-10z" fill="#d9d9d9" />
    <path d="M18 23.500h30M18 33h17M18 42.500h30M18 52h22.500" stroke="#bfbfbf" strokeWidth="4" />
    <g transform="translate(41 49) scale(.44)"><CodeGlyph /></g>
  </svg>
);

const SlideWindow = () => (
  <svg width="68" height="68" viewBox="0 0 68 68">
    <path d="M-5 0h78v67H-5z" fill="#2b2b2d" />
    <path d="M-3 3h1.500" stroke="#d9503f" strokeWidth="1.500" /><path d="M-1 3h1.500" stroke="#d99a3f" strokeWidth="1.500" /><path d="M1 3h1.500" stroke="#5cb04f" strokeWidth="1.500" />
    <path d="M8 3h17M38 3h32" stroke="#8a8a8c" strokeWidth="1.200" strokeDasharray="2 1" />
    <path d="M-2 9h36v6H-2z" fill="#000" /><path d="M34 9h36v6H34z" fill="#2f2fa2" /><path d="M-2 15h72v6H-2z" fill="#3838b4" />
    <path d="M14 13h18" stroke="#999" strokeWidth="1" strokeDasharray="3 1" />
    <text x="-1" y="20" fontSize="4.600" fontFamily="Inter, sans-serif" fill="#fff" textLength="27" lengthAdjust="spacingAndGlyphs">Gradient of a Function</text>
    <path d="M-2 21h72v40H-2z" fill="#fff" />
    <path d="M4 29h52M4 32h60M4 35h58M4 38h60M4 41h24M16 45h36M4 51h31" stroke="#8a8a8a" strokeWidth="1.200" strokeDasharray="3 .8" />
    <path d="M-2 61h36v2H-2z" fill="#000" /><path d="M34 61h36v2H34z" fill="#2f2fa2" />
    <clipPath id="mini-pic"><rect x="47" y="49" width="24" height="22" rx="4" /></clipPath>
    <rect x="46" y="48" width="26" height="24" rx="5" fill="#f3f3f3" />
    <g clipPath="url(#mini-pic)"><g transform="translate(47.500 49) scale(.4)"><Scenery /></g></g>
    <path d="M61 62h8l3 10H58z" fill="#dfe3e5" /><path d="M60 58h11v5H60z" fill="#151515" />
  </svg>
);

const Trash = () => (
  <svg width="68" height="68" viewBox="0 0 68 68">
    <defs><linearGradient id="bin"><stop stopColor="#7d8182" /><stop offset=".3" stopColor="#5d6163" /><stop offset=".65" stopColor="#8b8f90" /><stop offset="1" stopColor="#5a5e60" /></linearGradient></defs>
    <path d="M5 4q29-8 59 0l-8 61q-1 6-22 6t-22-6z" fill="url(#bin)" />
    <ellipse cx="34.500" cy="5" rx="29" ry="4.500" fill="#3b3e40" />
    <path d="M8 4l6-9 9 3 5-4 6 5 6-5 8 5 4 0 9 6-4 5-10-2-7 3-8-4-8 5-8-4z" fill="#ebebeb" />
    <path d="M22-4l-4 7M36-3l5 6M50-1l-4 6M14 6l7-2" stroke="#777" strokeWidth="1.500" />
    <path d="M18 5l6-4 6 6-7 2z" fill="#b9665a" /><path d="M40 6l5-7 6 4-2 5z" fill="#3f6f6a" /><path d="M44 1l5-2 2 4z" fill="#d98a3f" /><path d="M24 4l3-2 1 3z" fill="#3f6fd9" />
  </svg>
);

const DOCK_APPS = [
  [Finder, 1], [Launchpad], [Messages], [Photos], [FaceTime], [Calendar, 1], [Contacts], [Podcasts], [Notes, 1], [Music, 1],
  [Freeform], [AppStore], [Settings, 1], [Mail, 1], [Messenger], [WhatsApp, 1], [Spotify], [Chrome], [BraveDock, 1],
  [Terminal], [VsCode, 1], [Atom], [Anaconda], [Discord, 1],
];

const renderDock = ([Icon, running]) => (
  <DockItem key={Icon.name} $running={running}>
    <Icon />
    {Icon === Discord && <Badge />}
  </DockItem>
);

/* ---------- app ---------- */

const MENUS = [["File", 42], ["Edit", 45], ["View", 58], ["History", 85], ["Bookmarks", 134], ["Profiles", 90], ["Tab", 42], ["Window", 96], ["Help", 55]];

function TopBar() {
  return (
    <MenuBar>
      <FaApple size={30} />
      <Menus>
        <MenuItem $bold><FitText width={73}>Brave</FitText></MenuItem>
        {MENUS.map(([t, w]) => (
          <MenuItem key={t}><FitText width={w}>{t}</FitText></MenuItem>
        ))}
      </Menus>
      <Extras>
        <Extra $gap={0}>
          <svg width="32" height="32" viewBox="0 0 32 32" fill="#fff">
            <path d="M0 3q0-3 3-3h7q2 0 3 2l2 5h14q3 0 3 3v10H0zM0 22h10q1 3 3 3h6q2 0 3-3h10v7q0 3-3 3H3q-3 0-3-3z" />
            <path d="M16 5l11-3" stroke="#fff" strokeWidth="2" />
          </svg>
        </Extra>
        <Extra $gap={46}>
          <Line w={36} h={30} c="#ededea" sw={2.6}>
            <path d="M7 20H5q-3.500 0-3.500-3.500v-11Q1.500 2 5 2h18q3.500 0 3.500 3.500V7" /><rect x="8" y="9" width="26" height="19.500" rx="4" />
          </Line>
        </Extra>
        <Extra $gap={55}>
          <svg width="40" height="34" viewBox="0 0 40 34" fill="none">
            <ellipse cx="20" cy="17" rx="8.500" ry="7.500" stroke="#ededea" strokeWidth="5" />
            <ellipse cx="20" cy="17" rx="13" ry="11" stroke="#ededea" strokeWidth="5" strokeDasharray="2 1.200" />
            <path d="M0 17h6M34 17h6" stroke="#ededea" strokeWidth="1.500" />
            <path d="M8 2l4 6M13 0l2 5M32 2l-4 6M27 0l-2 5M8 32l4-6M13 34l2-5M32 32l-4-6M27 34l-2-5" stroke="#a9aaa2" strokeWidth="1.600" />
          </svg>
        </Extra>
        <Extra $gap={43}>
          <Line w={30} h={30} c="#ededea" sw={2.6}><circle cx="15" cy="15" r="13" /><path d="M11.500 10v10l8-5z" fill="#ededea" /></Line>
        </Extra>
        <Extra $gap={40}>
          <Line w={20} h={30} c="#ededea" sw={2.6}><path d="M2 8l15 13.500-7 6.500V2l7 6.500L2 22" /></Line>
        </Extra>
        <Extra $gap={43}>
          <svg width="41" height="36" viewBox="0 0 41 36">
            <circle cx="21" cy="12" r="11" fill="#8f9088" /><circle cx="10" cy="17" r="9.500" fill="#b4b5ae" />
            <path d="M3 24l18-9 12 4v8H8q-3-.5-5-3z" fill="#ededea" />
            <circle cx="29" cy="24" r="12.500" fill="#474a3b" /><circle cx="29" cy="24" r="11" fill="#ededea" />
            <path d="M24.500 19.500l9 9M33.500 19.500l-9 9" stroke="#474a3b" strokeWidth="2" />
          </svg>
        </Extra>
        <Extra $gap={35} $size={20.5}><FitText width={59}>100%</FitText></Extra>
        <Extra $gap={8}>
          <svg width="52" height="26" viewBox="0 0 52 26">
            <rect x="1.500" y="1.500" width="43" height="22" rx="7" fill="none" stroke="#9b9c94" strokeWidth="2" />
            <rect x="4.500" y="4.500" width="37" height="16" rx="4" fill="#ededea" />
            <path d="M47.500 9.500q3 0 3 3.500t-3 3.500z" fill="#9b9c94" />
            <path d="M26 1L14.500 14h8L19.500 25 31.500 11.500h-8z" fill="#ededea" stroke="#43463a" strokeWidth="2" />
          </svg>
        </Extra>
        <Extra $gap={34}>
          <Line w={38} h={24} c="#74776a" sw={2.6}><path d="M19 2v7M6 8l4 4M32 8l-4 4M2 21h4M14 21h10M32 21h4" /></Line>
        </Extra>
        <Extra $gap={36}>
          <svg width="38" height="28" viewBox="0 0 38 28" fill="none" stroke="#f2f2f0" strokeWidth="4.600">
            <path d="M2.500 10.500a23.500 23.500 0 0 1 33 0" /><path d="M9 17a14.300 14.300 0 0 1 20 0" /><path d="M19 27l-5.500-6a8 8 0 0 1 11 0z" fill="#f2f2f0" stroke="none" />
          </svg>
        </Extra>
        <Extra $gap={40}>
          <svg width="44" height="32" viewBox="0 0 44 32">
            <rect x="1.300" y="1.300" width="41.400" height="29.400" rx="5" fill="none" stroke="#ededea" strokeWidth="2.600" />
            <text x="22" y="24" fontSize="22" fontWeight="600" textAnchor="middle" fill="#ededea" fontFamily="Inter, sans-serif">A</text>
          </svg>
        </Extra>
        <Extra $gap={40}><Line w={28} h={26} c="#ededea" sw={2.8}><circle cx="11" cy="10.500" r="9" /><path d="M17.500 17.500l7.500 7" /></Line></Extra>
        <Extra $gap={28}>
          <svg width="47" height="28" viewBox="0 0 47 28">
            <rect x="1.300" y="1.800" width="24" height="10.500" rx="5.200" fill="none" stroke="#ededea" strokeWidth="2.400" /><circle cx="7" cy="7" r="3.800" fill="#ededea" />
            <rect y="15.500" width="27" height="12.500" rx="6.200" fill="#ededea" /><circle cx="20.500" cy="21.700" r="3.600" fill="#43463a" />
            <circle cx="41.500" cy="15" r="4.500" fill="#5e5ce6" />
          </svg>
        </Extra>
        <Extra $gap={26}>
          <svg width="30" height="30" viewBox="0 0 30 30">
            <defs><linearGradient id="siri" x2="1" y2="1"><stop stopColor="#f0a03c" /><stop offset=".45" stopColor="#e8567c" /><stop offset=".75" stopColor="#a66be0" /><stop offset="1" stopColor="#4ab5e8" /></linearGradient>
            <linearGradient id="siri-in" x2="0" y2="1"><stop stopColor="#ef5a86" /><stop offset="1" stopColor="#6aa4ee" /></linearGradient></defs>
            <circle cx="15" cy="15" r="15" fill="url(#siri)" />
            <circle cx="15" cy="15" r="10.500" fill="url(#siri-in)" stroke="#fff" strokeOpacity=".8" strokeWidth="1.500" />
            <path d="M5 15c4-6 7-4 10 0s6 6 10 0M6 17c4 4 6 2 9-2s6-5 9-2" stroke="#fff" strokeWidth="1.600" fill="none" />
          </svg>
        </Extra>
        <Extra $gap={32}><FitText width={290}>Wed 16 Jul  4:53:31 pm</FitText></Extra>
      </Extras>
    </MenuBar>
  );
}

function Tabs() {
  return (
    <TabStrip>
      <Lights><Light $c="#ed6a5e" /><Light $c="#f4bf4f" /><Light $c="#61c554" /></Lights>
      {TABS.map(([Icon, title, w], i) => (
        <Tab key={i} $last={i === TABS.length - 1}>
          <Icon />
          <TabTitle><FitText width={w}>{title}</FitText></TabTitle>
        </Tab>
      ))}
      <ActiveTab>
        <Dash />
        <ActiveTitle><FitText width={58}>Dash</FitText></ActiveTitle>
        <Line w={18} h={18} c="#fff" sw={2.6}><path d="M2 2l14 14M16 2L2 16" /></Line>
      </ActiveTab>
      <NewTab><Line w={24} h={24} c="#fff" sw={2.6}><path d="M12 2v20M2 12h20" /></Line></NewTab>
    </TabStrip>
  );
}

function Controls() {
  return (
    <Toolbar>
      <NavButtons>
        <Line w={19} h={32} c="#7f7e84" sw={2.6}><path d="M16 2L2 16l14 14" /></Line>
        <Line w={19} h={32} c="#7f7e84" sw={2.6}><path d="M2 2l14 14L2 30" /></Line>
        <svg width="36" height="34" viewBox="0 0 36 34" fill="none" style={{ marginLeft: -11 }}>
          <path d="M29 26.500A14.500 14.500 0 1 1 30 10" stroke="#f1f0f6" strokeWidth="3" strokeLinecap="round" />
          <path d="M34 5v12l-9-3.500z" fill="#f1f0f6" stroke="#f1f0f6" strokeLinejoin="round" />
        </svg>
      </NavButtons>
      <Line w={26} h={36}><path d="M2 5q0-3 3-3h16q3 0 3 3v28l-11-8.500L2 33z" /></Line>
      <AddressBar>
        <svg width="28" height="28" viewBox="0 0 28 28"><circle cx="14" cy="14" r="13.500" fill="#e4e3ea" /><circle cx="14" cy="7.800" r="1.900" fill="#25242a" /><path d="M11.500 12h3v8" stroke="#25242a" strokeWidth="2.800" fill="none" /></svg>
        <Address><FitText width={198}>127.0.0.1<b>:8050</b></FitText></Address>
        <Line w={24} h={34} c="#b9b8bf" sw={2.4}><path d="M8 12H5q-3 0-3 3v14q0 3 3 3h14q3 0 3-3V15q0-3-3-3h-3M12 22V2M6 8l6-6 6 6" /></Line>
        <Divider $w={2} $c="#a9a8ae" $l={19} $r={22} />
        <svg width="34" height="38" viewBox="0 0 34 38"><path d="M6 10h22l-2 14-9 9-9-9z" fill="#fff" /><SiBrave x="-1" y="1" size={36} fill="#ec5a2a" /></svg>
        <svg width="38" height="34" viewBox="0 0 38 34" style={{ marginLeft: 32 }}>
          <path d="M19 1L1 33l9-5 9-15z" fill="#ee5534" /><path d="M19 1l18 32-9-5-9-15z" fill="#8e2c63" /><path d="M1 33h36l-9-6H10z" fill="#5b2f91" /><path d="M19 13l8 14H11z" fill="#fff" />
        </svg>
      </AddressBar>
      <Tools>
        <Line w={36} h={36}><path d="M3 10q0-3 3-3h5q-1-5 4-5t4 5h6q3 0 3 3v5q6-1 6 4t-6 4v8q0 3-3 3h-4q0-5-5-5t-5 5H6q-3 0-3-3v-7q5 0 5-5t-5-5z" /></Line>
        <Line><rect x="2" y="2" width="30" height="30" rx="3" /><path d="M2 8.500h30M19.500 22.500l4 4" /><circle cx="17" cy="18.500" r="4.200" /></Line>
        <Divider $l={2} $r={2} />
        <Line><rect x="2" y="2" width="30" height="30" rx="2" /><path d="M25 2h7v30h-7z" fill="#f1f0f6" /></Line>
        <Line><path d="M31 14v-4q0-3-3-3H5q-3 0-3-2.500T5 2h19q4 0 4 5M2 5v24q0 3 3 3h23q3 0 3-3v-3M32 14h-8q-4 0-4 4v4q0 4 4 4h8z" /></Line>
        <Line w={36} h={36} sw={2.6}><path d="M15 2q2 12 13 14-11 2-13 16Q13 18 2 16 13 14 15 2z" /><path d="M29 24q.8 4.500 5 5.500-4.200 1-5 5.500-.8-4.500-5-5.500 4.200-1 5-5.500z" fill="#f1f0f6" strokeWidth="1" /></Line>
        <Line w={32} h={36} sw={2.5}><path d="M16 2l13 5v11q0 10-13 16Q3 28 3 18V7zM9 14q7-5.500 14 0M11.500 19q4.500-3.500 9 0" /><circle cx="16" cy="23.500" r="1.800" fill="#f1f0f6" /></Line>
        <Line w={36} h={30}><path d="M2 3h32M2 15h32M2 27h32" /></Line>
      </Tools>
    </Toolbar>
  );
}

function Bookmarks() {
  return (
    <BookmarkBar>
      <Line w={36} h={36} sw={2.5}><rect x="2" y="2" width="12" height="13" rx="3.500" /><rect x="20" y="2" width="12" height="13" rx="3.500" /><rect x="2" y="21" width="12" height="13" rx="3.500" /><rect x="20" y="21" width="12" height="13" rx="3.500" /></Line>
      <Divider $l={25} $r={29} />
      {BOOKMARKS.map(([Icon, title, w, cell]) => (
        <Bookmark key={title} $w={cell}><Icon /><FitText width={w}>{title}</FitText></Bookmark>
      ))}
      <Line w={22} h={20} c="#fff" sw={2.4}><path d="M2 2l7.500 8L2 18M12 2l7.500 8-7.500 8" /></Line>
      <Divider $l={32} $r={28} />
      <Bookmark $w={206}><Folder /><FitText width={161}>All Bookmarks</FitText></Bookmark>
    </BookmarkBar>
  );
}

export default function App() {
  return (
    <Desktop>
      <GlobalStyle />
      <TopBar />
      <WallpaperSliver />
      <Window>
        <Tabs />
        <Controls />
        <Bookmarks />
        <Page>
          <svg width="2880" height="330" viewBox="0 280 2880 330"><circle cx="1430" cy="114" r="270" fill="#656ef2" /></svg>
          <RangeLabel><FitText width={259}>Payload range (Kg):</FitText></RangeLabel>
          <PayloadSlider />
          <Scatter />
        </Page>
      </Window>
      <DockBar>
        {DOCK_APPS.map(renderDock)}
        <DockSeparator $l={20} $r={18} />
        {[[PreviewApp, 1], [GitHubDesktop, 1], [Dictionary]].map(renderDock)}
        <DockSeparator $l={21} $r={17} />
        {[[CodeDocument], [SlideWindow], [Trash]].map(renderDock)}
      </DockBar>
    </Desktop>
  );
}
